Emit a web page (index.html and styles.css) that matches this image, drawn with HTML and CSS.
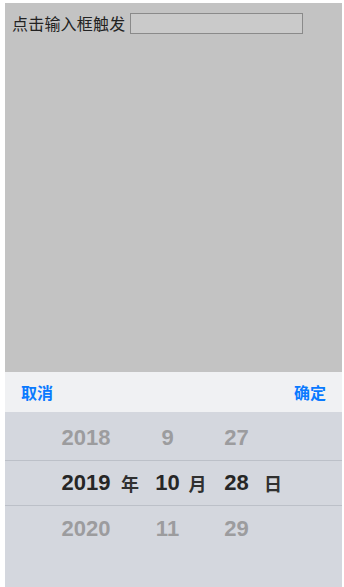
FILE: index.html
```html
<!DOCTYPE html>
<html>
    <head>
        <title>日期选择</title>
        <meta charset="UTF-8">
        <meta name="viewport" content="width=device-width, initial-scale=1.0">
        <link rel="stylesheet" href="styles.css">
    </head>
    <body>
        <div class="frame">
            <div class="page">
                <div class="field">
                    <label class="label">点击输入框触发</label>
                    <input class="trigger" type="text">
                </div>
            </div>
            <div class="picker">
                <div class="toolbar">
                    <span class="btn">取消</span>
                    <span class="btn">确定</span>
                </div>
                <div class="wheel">
                    <div class="wrow">
                        <span class="num">2018</span><span></span>
                        <span class="num">9</span><span></span>
                        <span class="num">27</span><span></span>
                    </div>
                    <div class="wrow current">
                        <span class="num">2019</span><span class="unit">年</span>
                        <span class="num">10</span><span class="unit">月</span>
                        <span class="num">28</span><span class="unit">日</span>
                    </div>
                    <div class="wrow">
                        <span class="num">2020</span><span></span>
                        <span class="num">11</span><span></span>
                        <span class="num">29</span><span></span>
                    </div>
                </div>
            </div>
        </div>
    </body>
</html>
```

FILE: styles.css
```css
body{
    margin: 0;
    background: white;
    font-family: "Noto Sans CJK SC", sans-serif;
}
.frame{
    margin: 3px 2px 0 5px;
    height: 584px;
    display: flex;
    flex-direction: column;
    background: #c3c3c3;
}
.page{
    flex: 1;
}
.field{
    display: flex;
    align-items: center;
    height: 23px;
    padding: 9px 7px 0;
}
.label{
    font-size: 16px;
    letter-spacing: 0.2px;
    color: #222;
    margin-right: 5px;
    line-height: 23px;
}
.trigger{
    box-sizing: border-box;
    width: 173px;
    height: 21px;
    border: 1px solid #8a8a8a;
    background: #cacaca;
    padding: 0 2px;
}
.toolbar{
    display: flex;
    justify-content: space-between;
    align-items: center;
    height: 40px;
    padding: 0 16px;
    background: #f0f1f3;
}
.btn{
    color: #0a7aff;
    font-size: 16px;
    font-weight: bold;
}
.wheel{
    height: 172px;
    padding-top: 3px;
    background: #d4d7de;
}
.wrow{
    display: grid;
    grid-template-columns: 50px 38px 37px 23px 55px 18px;
    padding-left: 56px;
    height: 45px;
    align-items: center;
}
.wrow.current{
    height: 44px;
    border-top: 1px solid #bcc0c8;
    border-bottom: 1px solid #bcc0c8;
}
.num{
    text-align: center;
    font-family: "Liberation Sans", Arial, sans-serif;
    font-weight: bold;
    font-size: 22px;
    color: #9c9c9e;
}
.current .num{
    color: #262626;
}
.unit{
    text-align: center;
    font-size: 18px;
    font-weight: bold;
    color: #303030;
}
```
